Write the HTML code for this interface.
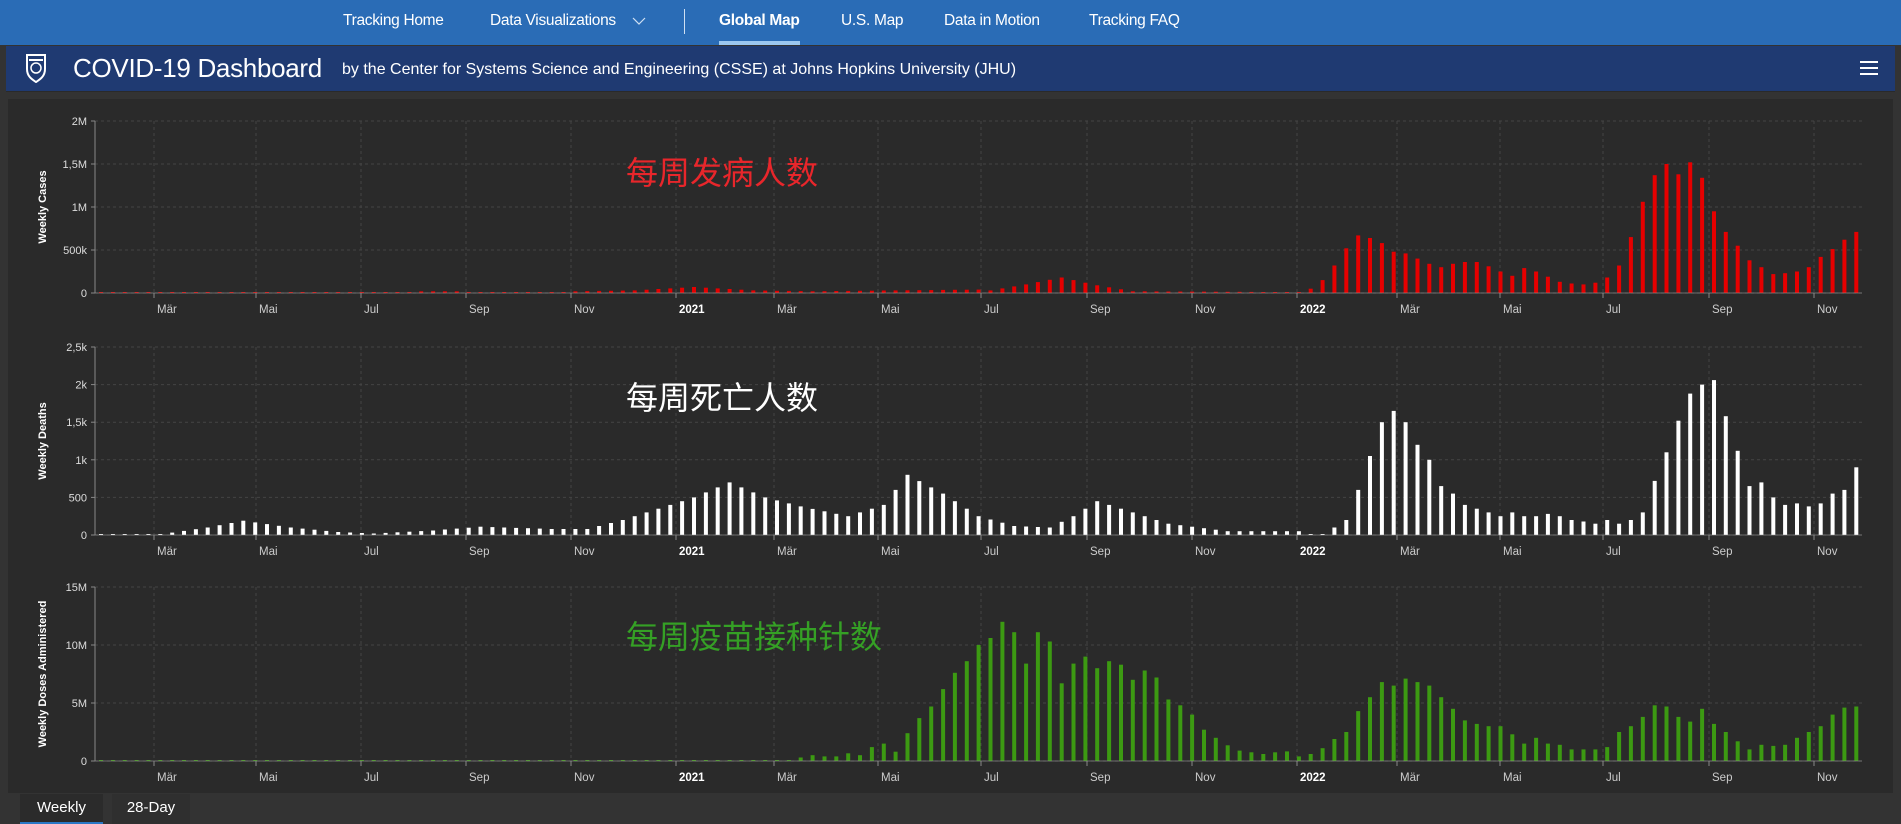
<!DOCTYPE html>
<html><head><meta charset="utf-8">
<style>
*{margin:0;padding:0;box-sizing:border-box}
body{width:1901px;height:824px;background:#333;overflow:hidden;font-family:"Liberation Sans","Noto Sans CJK SC",sans-serif;position:relative}
#nav{position:absolute;left:0;top:0;width:1901px;height:45px;background:#2a6cb6}
#nav span{position:absolute;top:12px;color:#fff;font-size:15.5px;letter-spacing:-0.3px}
#hdr{position:absolute;left:6px;top:46px;width:1889px;height:46px;background:#1f3a72;border-bottom:1px solid #2a2a2a}
#panel{position:absolute;left:8px;top:99px;width:1885px;height:694px;background:#2a2a2a}
.tab{position:absolute;top:794px;height:30px;color:#fff;font-size:15px;line-height:28px;text-align:center}
</style></head><body>
<div id="nav">
<span style="left:343px">Tracking Home</span>
<span style="left:490px">Data Visualizations</span>
<svg style="position:absolute;left:632px;top:16px" width="14" height="10"><path d="M1 2 L7 8 L13 2" stroke="#cfe0f3" stroke-width="1.2" fill="none"/></svg>
<div style="position:absolute;left:684px;top:9px;width:1px;height:25px;background:#cfe0f3"></div>
<span style="left:719px;font-weight:bold">Global Map</span>
<div style="position:absolute;left:719px;top:41px;width:81px;height:4px;background:#9cc8f0"></div>
<span style="left:841px">U.S. Map</span>
<span style="left:944px">Data in Motion</span>
<span style="left:1089px">Tracking FAQ</span>
</div>
<div id="hdr">
<svg style="position:absolute;left:19px;top:7px" width="22" height="30" viewBox="0 0 22 30"><path d="M2 2 H20 V16 C20 24 14 27 11 29 C8 27 2 24 2 16 Z" fill="none" stroke="#fff" stroke-width="2"/><circle cx="11" cy="15" r="5" fill="none" stroke="#fff" stroke-width="1.5"/><path d="M4 7 H18" stroke="#fff" stroke-width="2"/></svg>
<span style="position:absolute;left:67px;top:7px;color:#fff;font-size:26px;letter-spacing:-0.3px">COVID-19 Dashboard</span>
<span style="position:absolute;left:336px;top:15px;color:#fff;font-size:16px;letter-spacing:0px">by the Center for Systems Science and Engineering (CSSE) at Johns Hopkins University (JHU)</span>
<div style="position:absolute;left:1854px;top:15px;width:18px;height:2px;background:#fff;box-shadow:0 6px 0 #fff,0 12px 0 #fff"></div>
</div>
<div id="panel"></div>
<svg id="ch" style="position:absolute;left:0;top:0" width="1901" height="824"></svg>
<div class="tab" style="left:20px;width:83px;background:#2b2b2b;border-bottom:2px solid #2a78c6">Weekly</div>
<div class="tab" style="left:112px;width:78px;background:#2f2f2f">28-Day</div>
<script>
var svg=document.getElementById('ch'),h='';
var ticks=[[154,'Mär'],[256,'Mai'],[361,'Jul'],[466,'Sep'],[571,'Nov'],[676,'2021',1],[774,'Mär'],[878,'Mai'],[981,'Jul'],[1087,'Sep'],[1192,'Nov'],[1297,'2022',1],[1397,'Mär'],[1500,'Mai'],[1603,'Jul'],[1709,'Sep'],[1814,'Nov']];
function interp(kp){var a=[];for(var i=0;i<149;i++){var v=0;for(var k=0;k<kp.length-1;k++){if(i>=kp[k][0]&&i<=kp[k+1][0]){var t=(i-kp[k][0])/((kp[k+1][0]-kp[k][0])||1);v=kp[k][1]+t*(kp[k+1][1]-kp[k][1]);break;}}a.push(v);}return a;}
function tail(a,l){for(var j=0;j<l.length;j++)a[149-l.length+j]=l[j];return a;}
var cases=interp([[0,0.002],[26,0.002],[27,0.02],[30,0.02],[31,0.004],[39,0.004],[40,0.02],[45,0.03],[50,0.07],[55,0.03],[60,0.02],[74,0.04],[75,0.03],[78,0.1],[81,0.18],[84,0.09],[87,0.02],[101,0.01]]);
tail(cases,[0.05,0.15,0.32,0.52,0.67,0.64,0.58,0.48,0.46,0.40,0.34,0.30,0.34,0.36,0.36,0.31,0.25,0.20,0.29,0.25,0.19,0.13,0.11,0.10,0.12,0.18,0.32,0.65,1.06,1.37,1.5,1.38,1.52,1.34,0.95,0.71,0.55,0.38,0.30,0.22,0.23,0.25,0.30,0.42,0.51,0.62,0.71]);
var deaths=interp([[0,0.005],[5,0.01],[9,0.1],[12,0.19],[16,0.1],[20,0.04],[23,0.02],[28,0.06],[32,0.11],[38,0.08],[41,0.08],[44,0.2],[47,0.35],[50,0.5],[53,0.7],[56,0.5],[59,0.38],[63,0.25],[66,0.4],[68,0.8],[71,0.55],[74,0.25],[77,0.12],[80,0.1],[82,0.25],[84,0.45],[87,0.3],[90,0.15],[95,0.05],[101,0.05]]);
tail(deaths,[0.1,0.2,0.6,1.05,1.5,1.65,1.5,1.2,1.0,0.65,0.55,0.4,0.35,0.3,0.25,0.3,0.25,0.25,0.28,0.25,0.2,0.18,0.15,0.2,0.15,0.2,0.3,0.72,1.1,1.52,1.88,2.0,2.06,1.58,1.12,0.65,0.7,0.5,0.4,0.42,0.38,0.42,0.55,0.6,0.9]);
var vac=interp([[0,0.05],[58,0.05]]);
tail(vac,[0.3,0.5,0.4,0.4,0.66,0.5,1.2,1.5,0.8,2.4,3.7,4.7,6.2,7.6,8.6,10,10.6,12,11.1,8.4,11.1,10.3,6.7,8.4,9,8,8.6,8.3,7,7.8,7.2,5.3,4.8,4,2.7,2,1.35,0.9,0.75,0.6,0.75,0.83,0.4,0.6,1.1,1.9,2.5,4.3,5.5,
6.8,6.5,7.1,6.8,6.5,5.5,4.5,3.5,3.2,3,3,2.3,1.5,2,1.5,1.4,1,1,1,1.2,2.5,3,3.8,4.8,4.7,3.8,3.4,4.5,3.2,2.5,1.7,1,1.4,1.3,1.4,2,2.5,3,4,4.6,4.7]);
function chart(top,zero,max,step,labels,title,data,col,lx,cn,ccol,cy){
 var L=95,R=1862;
 for(var k=0;k<labels.length;k++){var y=zero-(zero-top)*k*step/max;
  h+='<line x1="'+L+'" x2="'+R+'" y1="'+y+'" y2="'+y+'" stroke="#444" stroke-dasharray="3,3"/>';
  h+='<line x1="'+(L-4)+'" x2="'+L+'" y1="'+y+'" y2="'+y+'" stroke="#888"/>';
  h+='<text x="'+(L-8)+'" y="'+(y+4)+'" fill="#ddd" font-size="11" text-anchor="end">'+labels[k]+'</text>';}
 ticks.forEach(function(t){h+='<line x1="'+t[0]+'" x2="'+t[0]+'" y1="'+top+'" y2="'+zero+'" stroke="#444" stroke-dasharray="3,3"/><line x1="'+t[0]+'" x2="'+t[0]+'" y1="'+zero+'" y2="'+(zero+5)+'" stroke="#888"/>';
  h+='<text x="'+(t[0]+3)+'" y="'+(zero+20)+'" fill="'+(t[2]?'#fff':'#ccc')+'" font-size="11.5"'+(t[2]?' font-weight="bold"':'')+'>'+t[1]+'</text>';});
 h+='<line x1="'+L+'" x2="'+L+'" y1="'+top+'" y2="'+zero+'" stroke="#888"/>';
 for(var i=0;i<149;i++){var x=101+i*11.86;var bh=Math.max(1,(zero-top)*data[i]/max);
  h+='<rect x="'+(x-2).toFixed(1)+'" y="'+(zero-bh).toFixed(1)+'" width="4" height="'+bh.toFixed(1)+'" fill="'+col+'"/>';}
 h+='<line x1="'+L+'" x2="'+R+'" y1="'+zero+'" y2="'+zero+'" stroke="#999" stroke-opacity="0.6"/>';
 var my=(top+zero)/2;
 h+='<text transform="translate('+lx+','+my+') rotate(-90)" fill="#fff" font-size="11" font-weight="bold" text-anchor="middle">'+title+'</text>';
 h+='<text x="626" y="'+cy+'" fill="'+ccol+'" font-size="32" font-family="Noto Sans CJK SC,sans-serif">'+cn+'</text>';
}
chart(121,293,2,0.5,['0','500k','1M','1,5M','2M'],'Weekly Cases',cases,'#e60000',46,'每周发病人数','#e8262b',184);
chart(347,535,2.5,0.5,['0','500','1k','1,5k','2k','2,5k'],'Weekly Deaths',deaths,'#ffffff',46,'每周死亡人数','#ffffff',409);
chart(587,761,15,5,['0','5M','10M','15M'],'Weekly Doses Administered',vac,'#3c9a12',46,'每周疫苗接种针数','#35a025',648);
svg.innerHTML=h;
</script>
</body></html>
